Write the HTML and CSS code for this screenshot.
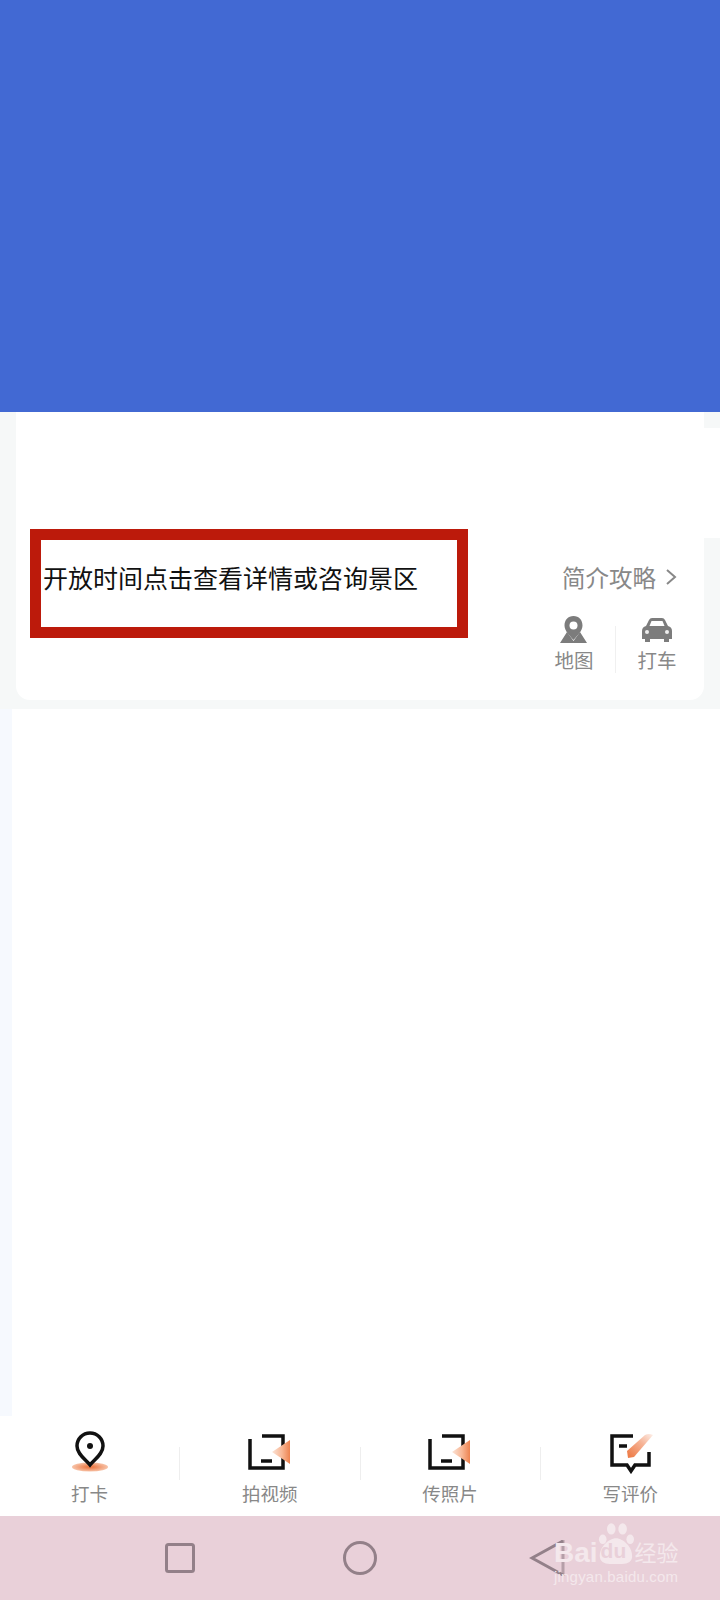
FILE: index.html
```html
<!DOCTYPE html>
<html lang="zh-CN">
<head>
  <meta charset="UTF-8" />
  <meta name="viewport" content="width=device-width, initial-scale=1.0"/>
  <title>景区详情</title>
  <link rel="stylesheet" href="styles.css">
</head>
<body>
  <svg class="defs" aria-hidden="true">
    <defs>
      <linearGradient id="cone" x1="0" x2="1" y1="0" y2="0">
        <stop offset="0" stop-color="#fbe3d6"/>
        <stop offset="0.55" stop-color="#f8b795"/>
        <stop offset="1" stop-color="#ee8350"/>
      </linearGradient>
      <linearGradient id="pen" x1="0" x2="1" y1="1" y2="0">
        <stop offset="0.1" stop-color="#ee7f4c"/>
        <stop offset="0.6" stop-color="#f6b497"/>
        <stop offset="1" stop-color="#fdf0ea"/>
      </linearGradient>
      <radialGradient id="halo">
        <stop offset="0.2" stop-color="#ee7f4c"/>
        <stop offset="1" stop-color="#f7c3a8"/>
      </radialGradient>
      <symbol id="icon-media" viewBox="0 0 48 44">
        <path d="M4 9V38H37V6H16M15 31H26" fill="none" stroke="#111" stroke-width="3.5"/>
        <path d="M26 22L44 10V34Z" fill="url(#cone)"/>
      </symbol>
    </defs>
  </svg>

  <div class="page">
    <div class="hero"></div>

    <section class="info">
      <div class="info-card">
        <div class="notice">
          <p class="notice-text">开放时间点击查看详情或咨询景区</p>
        </div>
        <div class="info-side">
          <a class="guide-link">简介攻略
            <svg class="chevron" width="12" height="16" viewBox="0 0 12 16"><path d="M2 1L10 8L2 15" fill="none" stroke="#888" stroke-width="2"/></svg>
          </a>
          <div class="actions">
            <div class="action">
              <svg width="30" height="28" viewBox="0 0 30 28">
                <path d="M8 16L1 27H28L21 16L14.500 25Z" fill="#7c7c7c"/>
                <path d="M14.500 0C9 0 5.500 4 5.500 9.500C5.500 15 11 20 14.500 24C18 20 23.500 15 23.500 9.500C23.500 4 20 0 14.500 0Z" fill="#7c7c7c"/>
                <circle cx="14.500" cy="9.500" r="4" fill="#fff"/>
              </svg>
              <span>地图</span>
            </div>
            <span class="action-sep"></span>
            <div class="action">
              <svg width="32" height="28" viewBox="0 0 32 28">
                <path d="M5 10L8 4Q9 2 11 2H21Q23 2 24 4L27 10Q31 11 31 15V23H28V26H23V23H9V26H4V23H1V15Q1 11 5 10Z" fill="#7c7c7c"/>
                <path d="M8.500 10L10.500 5H21.500L23.500 10Z" fill="#fff"/>
                <circle cx="6" cy="16" r="2" fill="#eee"/>
                <circle cx="26" cy="16" r="2" fill="#eee"/>
              </svg>
              <span>打车</span>
            </div>
          </div>
        </div>
      </div>
    </section>

    <main class="content"></main>

    <nav class="tabs">
      <div class="tab">
        <svg width="48" height="44" viewBox="0 0 48 44">
          <ellipse cx="24" cy="37" rx="18" ry="4.500" fill="url(#halo)"/>
          <path d="M24 35C19 29 11 24 11 16A13 13 0 0 1 37 16C37 24 29 29 24 35Z" fill="#fff" stroke="#111" stroke-width="3.500"/>
          <circle cx="24" cy="16" r="3" fill="#111"/>
        </svg>
        <span>打卡</span>
      </div>
      <span class="tab-sep"></span>
      <div class="tab">
        <svg width="48" height="44"><use href="#icon-media"/></svg>
        <span>拍视频</span>
      </div>
      <span class="tab-sep"></span>
      <div class="tab">
        <svg width="48" height="44"><use href="#icon-media"/></svg>
        <span>传照片</span>
      </div>
      <span class="tab-sep"></span>
      <div class="tab">
        <svg width="48" height="44" viewBox="0 0 48 44">
          <path d="M27 6H6V35H21L25 41L29 35H43V22M13 16H21" fill="none" stroke="#111" stroke-width="3.500"/>
          <path d="M22 28L21 21L39 5Q43 3 47 5L28 27Z" fill="url(#pen)"/>
        </svg>
        <span>写评价</span>
      </div>
    </nav>

    <footer class="sys-nav">
      <svg width="36" height="36" viewBox="0 0 36 36"><rect x="4.500" y="4.500" width="27" height="27" rx="2" fill="none" stroke="#938089" stroke-width="3"/></svg>
      <svg width="36" height="36" viewBox="0 0 36 36"><circle cx="18" cy="18" r="15.500" fill="none" stroke="#938089" stroke-width="3"/></svg>
      <svg class="sys-back" width="36" height="36" viewBox="0 0 36 36"><path d="M34 1L3 18L34 35" fill="none" stroke="#938089" stroke-width="3"/><path d="M34 0V36" stroke="#938089" stroke-width="3" opacity="0.6"/></svg>

      <div class="watermark">
        <div class="wm-top">
          <span class="wm-bai">Bai</span>
          <span class="wm-paw">
            <svg width="36" height="46" viewBox="0 0 38 46">
              <ellipse cx="5" cy="17" rx="4" ry="5"/>
              <ellipse cx="14" cy="6" rx="4.500" ry="6"/>
              <ellipse cx="26" cy="6" rx="4.500" ry="6"/>
              <ellipse cx="34" cy="17" rx="4" ry="5"/>
              <path d="M19 16C27 16 37 26 36 36C35 44 26 43 19 43C12 43 3 44 2 36C1 26 11 16 19 16Z"/>
            </svg>
            <span class="wm-du">du</span>
          </span>
          <span class="wm-cn">经验</span>
        </div>
        <div class="wm-url">jingyan.baidu.com</div>
      </div>
    </footer>
  </div>
</body>
</html>
```

FILE: styles.css
```css
body {
  margin: 0;
  background: #ffffff;
  font-family: "Noto Sans CJK SC", "Liberation Sans", sans-serif;
}

.defs {
  position: absolute;
  width: 0;
  height: 0;
}

.page {
  display: flex;
  flex-direction: column;
  width: 720px;
  height: 1600px;
  overflow: hidden;
}

.hero {
  height: 412px;
  background: #4269d3;
}

/* info card, the strips left and right of it are grey */
.info {
  height: 297px;
  padding: 0 16px 9px;
  box-sizing: border-box;
  background:
    linear-gradient(#ffffff, #ffffff) right 0 top 16px / 16px 110px no-repeat,
    #f6f8f8;
}

.info-card {
  display: flex;
  height: 100%;
  padding-left: 14px;
  background: #ffffff;
  border-radius: 0 0 14px 14px;
}

.notice {
  width: 438px;
  height: 109px;
  margin-top: 117px;
  padding: 22px 2px 0;
  box-sizing: border-box;
  border: 11px solid #bc1a0b;
}

.notice-text {
  margin: 0;
  font-size: 25px;
  line-height: 30px;
  white-space: nowrap;
  color: #111111;
}

.info-side {
  display: flex;
  flex-direction: column;
  align-items: flex-end;
  margin-left: auto;
  margin-top: 150px;
  padding-right: 27px;
}

.guide-link {
  display: flex;
  align-items: center;
  gap: 9px;
  font-size: 23.500px;
  line-height: 30px;
  color: #888888;
}

.actions {
  display: flex;
  margin-top: 24px;
}

.action {
  display: flex;
  flex-direction: column;
  align-items: center;
  width: 40px;
  font-size: 19.500px;
  line-height: 26px;
  color: #888888;
}

.action svg {
  margin-bottom: 3px;
}

.action-sep {
  align-self: flex-end;
  width: 1px;
  height: 47px;
  margin: 0 21px;
  background: #f0f0f0;
}

.content {
  flex: 1;
  margin-left: 12px;
  background: #ffffff;
  box-shadow: -12px 0 0 #f6f9fe;
}

.tabs {
  display: flex;
  height: 100px;
  background: #ffffff;
}

.tab {
  display: flex;
  flex: 1;
  flex-direction: column;
  align-items: center;
  padding-top: 14px;
  font-size: 18.500px;
  line-height: 26px;
  color: #888888;
}

.tab svg {
  margin-bottom: 6px;
}

.tab-sep {
  width: 1px;
  height: 33px;
  margin-top: 31px;
  background: #eeeeee;
}

.sys-nav {
  position: relative;
  display: grid;
  grid-template-columns: repeat(3, 1fr);
  align-items: center;
  justify-items: center;
  height: 84px;
  padding: 0 90px;
  background: #e9d0d9;
}

.sys-back {
  margin-left: 14px;
}

.watermark {
  position: absolute;
  left: 554px;
  top: 6px;
  color: #f4e8ec;
}

.wm-top {
  display: flex;
  align-items: flex-end;
  height: 46px;
}

.wm-bai {
  font-family: "Liberation Sans", sans-serif;
  font-weight: 700;
  font-size: 28px;
  line-height: 30px;
}

.wm-paw {
  position: relative;
  display: block;
  width: 36px;
  height: 46px;
}

.wm-paw svg {
  fill: #f4e8ec;
}

.wm-du {
  position: absolute;
  left: 3px;
  top: 16px;
  font-family: "Liberation Sans", sans-serif;
  font-weight: 700;
  font-size: 21px;
  line-height: 26px;
  color: #e9d0d9;
}

.wm-cn {
  margin-left: 1px;
  font-size: 22px;
  line-height: 34px;
}

.wm-url {
  margin-top: 0;
  font-family: "Liberation Sans", sans-serif;
  font-size: 15px;
  line-height: 18px;
  letter-spacing: 0.2px;
  white-space: nowrap;
}
```
